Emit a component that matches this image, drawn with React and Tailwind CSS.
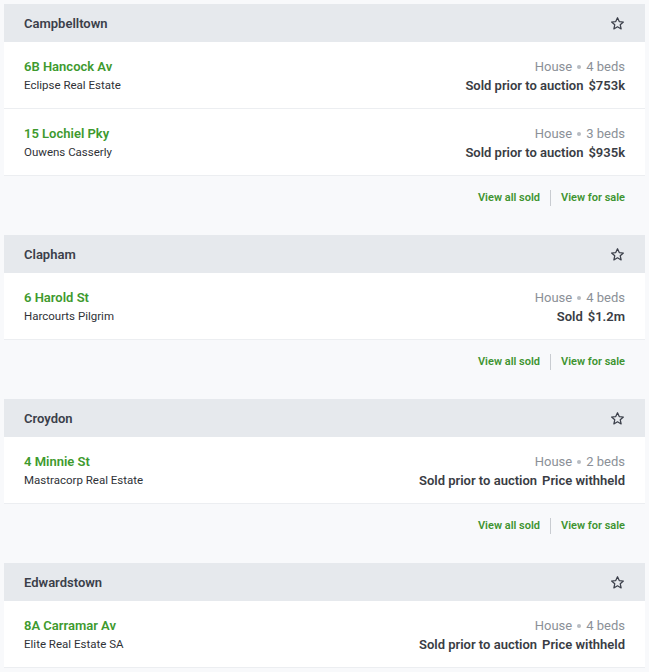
import React from 'react';

const sections = [
  {
    suburb: 'Campbelltown',
    listings: [
      { address: '6B Hancock Av', agency: 'Eclipse Real Estate', type: 'House', beds: 4, status: 'Sold prior to auction', price: '$753k' },
      { address: '15 Lochiel Pky', agency: 'Ouwens Casserly', type: 'House', beds: 3, status: 'Sold prior to auction', price: '$935k' },
    ],
  },
  {
    suburb: 'Clapham',
    listings: [
      { address: '6 Harold St', agency: 'Harcourts Pilgrim', type: 'House', beds: 4, status: 'Sold', price: '$1.2m' },
    ],
  },
  {
    suburb: 'Croydon',
    listings: [
      { address: '4 Minnie St', agency: 'Mastracorp Real Estate', type: 'House', beds: 2, status: 'Sold prior to auction', price: 'Price withheld' },
    ],
  },
  {
    suburb: 'Edwardstown',
    listings: [
      { address: '8A Carramar Av', agency: 'Elite Real Estate SA', type: 'House', beds: 4, status: 'Sold prior to auction', price: 'Price withheld' },
    ],
  },
];

const StarIcon = () => (
  <svg width="15" height="15" viewBox="0 0 24 24" fill="none" stroke="#3b3f4a" strokeWidth="2" strokeLinejoin="round">
    <path d="M12 2.8l2.8 6.1 6.6.7-5 4.5 1.4 6.6L12 17.3l-5.8 3.4 1.4-6.6-5-4.5 6.6-.7z" />
  </svg>
);

const ListingRow = ({ listing }) => (
  <div className="flex justify-between items-start bg-white px-5 pt-[15px] pb-[13px] border-b border-[#eceef1] leading-[19px]">
    <div>
      <p className="text-[13px] font-semibold text-[#3e9a2e]">{listing.address}</p>
      <p className="text-[11.5px] text-[#2f3237]">{listing.agency}</p>
    </div>
    <div className="text-right">
      <p className="text-[13px] text-[#8b9097]">
        {listing.type}
        <span className="inline-block w-[4px] h-[4px] mx-[5px] mb-[2px] align-middle rounded-full bg-[#b8bcc2]" />
        {listing.beds} beds
      </p>
      <p className="text-[13px] font-semibold text-[#3a3d44]">
        {listing.status}
        <span className="ml-[5px]">{listing.price}</span>
      </p>
    </div>
  </div>
);

const App = () => {
  return (
    <div className="min-h-[672px] bg-[#f8f9fb] pt-1 px-1" style={{ fontFamily: 'Roboto, "Liberation Sans", sans-serif' }}>
      {sections.map((section, i) => (
        <div key={section.suburb} className={i < sections.length - 1 ? 'mb-[18px]' : ''}>
          <div className="flex items-center justify-between h-[38px] px-5 bg-[#e6e9ed]">
            <h3 className="text-[13px] font-semibold text-[#3b3f4a] pt-[2px]">{section.suburb}</h3>
            <StarIcon />
          </div>
          {section.listings.map((l) => (
            <ListingRow key={l.address} listing={l} />
          ))}
          {i < sections.length - 1 && (
            <div className="flex items-center justify-end h-[41px] pt-[3px] px-5 text-[11px] font-semibold text-[#3e9430]">
              <span>View all sold</span>
              <span className="mx-[10px] h-[16px] w-px bg-[#c9ccd1]" />
              <span>View for sale</span>
            </div>
          )}
        </div>
      ))}
    </div>
  );
};

export default App;
